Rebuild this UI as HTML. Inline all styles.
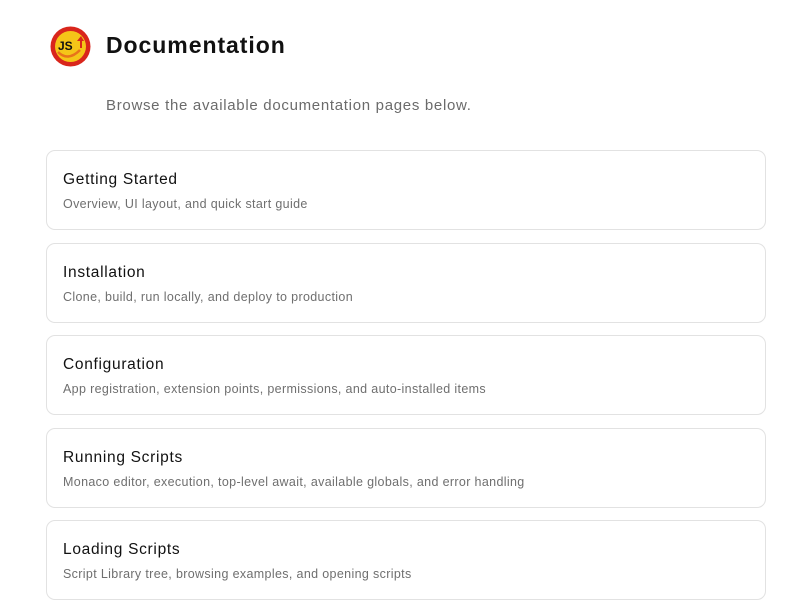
<!DOCTYPE html>
<html><head><meta charset="utf-8"><style>
*{margin:0;padding:0;box-sizing:border-box}
body{width:796px;height:606px;overflow:hidden;background:#fff;font-family:"Liberation Sans",sans-serif;position:relative}
.logo{position:absolute;left:50px;top:26px;width:41px;height:41px}
h1{position:absolute;left:106px;top:32px;font-size:23px;font-weight:bold;color:#111;letter-spacing:0.95px}
.sub{position:absolute;left:106px;top:97px;font-size:15px;color:#6b6b6b;letter-spacing:0.7px}
.card{position:absolute;left:46px;width:720px;height:80px;border:1px solid #e2e2e2;border-radius:9px;background:#fff}
.card .t{position:absolute;left:16px;top:20px;font-size:15.5px;color:#111;letter-spacing:0.7px}
.card .d{position:absolute;left:16px;top:46px;font-size:12.5px;color:#6f6f6f;letter-spacing:0.35px}
</style></head><body>
<svg class="logo" viewBox="0 0 41 41">
<circle cx="20.5" cy="20.5" r="20" fill="#d9261c"/>
<circle cx="20.5" cy="20.5" r="15.5" fill="#f5c518"/>
<path d="M8 26 Q18 36 30 24" stroke="#e8731a" stroke-width="2.5" fill="none"/>
<path d="M27 15 L31 10 L34 15 Z" fill="#d9261c"/>
<path d="M31 14 L31 22" stroke="#d9261c" stroke-width="2"/>
<text x="8" y="24" font-family="Liberation Sans" font-weight="bold" font-size="12" fill="#111">JS</text>
</svg>
<h1>Documentation</h1>
<div class="sub">Browse the available documentation pages below.</div>
<div class="card" style="top:150px"><div class="t">Getting Started</div><div class="d">Overview, UI layout, and quick start guide</div></div>
<div class="card" style="top:243px"><div class="t">Installation</div><div class="d">Clone, build, run locally, and deploy to production</div></div>
<div class="card" style="top:335px"><div class="t">Configuration</div><div class="d">App registration, extension points, permissions, and auto-installed items</div></div>
<div class="card" style="top:428px"><div class="t">Running Scripts</div><div class="d">Monaco editor, execution, top-level await, available globals, and error handling</div></div>
<div class="card" style="top:520px"><div class="t">Loading Scripts</div><div class="d">Script Library tree, browsing examples, and opening scripts</div></div>
</body></html>
